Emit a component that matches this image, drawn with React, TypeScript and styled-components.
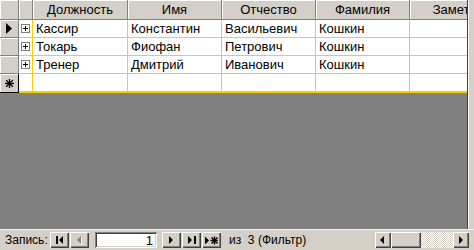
import React from 'react';
import styled, { createGlobalStyle, css } from 'styled-components';

const GlobalStyle = createGlobalStyle`
	html, body {
		margin: 0;
		padding: 0;
		background: #d4d0c8;
	}
	body {
		font-family: 'Liberation Sans', Arial, sans-serif;
		font-size: 13px;
		color: #000;
	}
`;

const COLUMNS = '19px 14px 95px 94px 94px 94px 96px';
const GRID_YELLOW = '#ffcc00';

const raised = css`
	background: #d4d0c8;
	box-shadow: inset 1px 1px #ffffff, inset -1px -1px #404040, inset -2px -2px #808080;
`;

const Window = styled.div`
	width: 474px;
	height: 250px;
	display: flex;
	flex-direction: column;
	overflow: hidden;
	background: #d4d0c8;
`;

const SheetArea = styled.div`
	height: 229px;
	display: flex;
`;

const Sheet = styled.div`
	flex: 1;
	background: #808080;
	overflow: hidden;
`;

const RightFrame = styled.div`
	width: 7px;
	box-sizing: border-box;
	border-left: 1px solid #404040;
	box-shadow: inset 1px 0 #ffffff;
	background: #d4d0c8;
`;

const Row = styled.div<{ $height: number }>`
	display: grid;
	grid-template-columns: ${COLUMNS};
	height: ${(p) => p.$height}px;
	width: max-content;
`;

const HeaderCell = styled.div`
	box-sizing: border-box;
	background: #d4d0c8;
	border-right: 1px solid #808080;
	border-bottom: 1px solid #808080;
	box-shadow: inset 1px 1px #ffffff;
	display: flex;
	align-items: center;
	justify-content: center;
	white-space: nowrap;
	overflow: hidden;
`;

const SelectorCell = styled.div<{ $newRow?: boolean }>`
	box-sizing: border-box;
	background: #d4d0c8;
	display: flex;
	align-items: center;
	justify-content: center;
	border-right: 1px solid ${(p) => (p.$newRow ? '#000000' : '#808080')};
	border-bottom: 1px solid ${(p) => (p.$newRow ? '#000000' : '#808080')};
	box-shadow: inset 1px 1px #ffffff;
`;

const DataCell = styled.div<{ $newRow?: boolean }>`
	box-sizing: border-box;
	background: #ffffff;
	border-right: 1px solid ${GRID_YELLOW};
	border-bottom: ${(p) => (p.$newRow ? 2 : 1)}px solid ${GRID_YELLOW};
	padding-left: 3px;
	display: flex;
	align-items: center;
	white-space: nowrap;
	overflow: hidden;
`;

const ExpandCell = styled(DataCell)`
	padding-left: 0;
	justify-content: center;
`;

const PlusBox = styled.span`
	width: 9px;
	height: 9px;
	box-sizing: border-box;
	border: 1px solid #808080;
	background: #ffffff;
	position: relative;
	&::before,
	&::after {
		content: '';
		position: absolute;
		background: #000;
	}
	&::before {
		left: 1px;
		top: 3px;
		width: 5px;
		height: 1px;
	}
	&::after {
		left: 3px;
		top: 1px;
		width: 1px;
		height: 5px;
	}
`;

const NavBar = styled.div`
	height: 21px;
	box-sizing: border-box;
	border-top: 1px solid #f4f2ee;
	display: flex;
	align-items: center;
	padding-left: 5px;
	padding-right: 5px;
	white-space: nowrap;
	font-size: 12px;
`;

const NavLabel = styled.span`
	flex: none;
	width: 45px;
`;

const ButtonGroup = styled.div<{ $gap?: number }>`
	display: flex;
	flex: none;
	gap: 1px;
	margin-left: ${(p) => p.$gap ?? 0}px;
`;

const NavButton = styled.div`
	${raised};
	width: 19px;
	height: 16px;
	display: flex;
	align-items: center;
	justify-content: center;
`;

const RecordInput = styled.div`
	flex: none;
	width: 62px;
	height: 16px;
	margin-left: 6px;
	box-sizing: border-box;
	background: #ffffff;
	box-shadow: inset 1px 1px #808080, inset -1px -1px #ffffff, inset 2px 2px #404040, inset -2px -2px #d4d0c8;
	display: flex;
	align-items: center;
	justify-content: flex-end;
	padding-right: 4px;
	font-size: 13px;
`;

const CountText = styled.span`
	margin-left: 8px;
	white-space: pre;
`;

const ScrollBar = styled.div`
	margin-left: auto;
	display: flex;
	flex: none;
	height: 16px;
	width: 94px;
`;

const ScrollButton = styled.div`
	${raised};
	width: 16px;
	height: 16px;
	display: flex;
	align-items: center;
	justify-content: center;
	flex: none;
`;

const ScrollThumb = styled.div`
	${raised};
	width: 30px;
	height: 16px;
	flex: none;
`;

const ScrollTrack = styled.div`
	flex: 1;
	background-color: #ffffff;
	background-image: repeating-conic-gradient(#d4d0c8 0% 25%, #ffffff 0% 50%);
	background-size: 2px 2px;
`;

const Glyph = ({ kind, disabled }: { kind: string; disabled?: boolean }) => {
	const fill = disabled ? '#808080' : '#000000';
	if (kind === 'first')
		return (
			<svg width='8' height='8' viewBox='0 0 8 8'>
				<rect x='0' y='0' width='2' height='8' fill={fill} />
				<polygon points='7,0 3,4 7,8' fill={fill} />
			</svg>
		);
	if (kind === 'prev')
		return (
			<svg width='6' height='9' viewBox='0 0 6 9'>
				{disabled && <polygon points='5,1 1,5 5,9' fill='#ffffff' />}
				<polygon points='4,0 0,4 4,8' fill={fill} />
			</svg>
		);
	if (kind === 'next')
		return (
			<svg width='5' height='8' viewBox='0 0 5 8'>
				<polygon points='0,0 4,4 0,8' fill={fill} />
			</svg>
		);
	if (kind === 'last')
		return (
			<svg width='8' height='8' viewBox='0 0 8 8'>
				<polygon points='0,0 4,4 0,8' fill={fill} />
				<rect x='6' y='0' width='2' height='8' fill={fill} />
			</svg>
		);
	return (
		<svg width='13' height='9' viewBox='0 0 13 9'>
			<polygon points='0,0.5 4,4.5 0,8.5' fill={fill} />
			<g stroke={fill} strokeWidth='1.4'>
				<line x1='9.5' y1='0.5' x2='9.5' y2='8.5' />
				<line x1='5.5' y1='4.5' x2='13' y2='4.5' />
				<line x1='6.5' y1='1.5' x2='12.5' y2='7.5' />
				<line x1='12.5' y1='1.5' x2='6.5' y2='7.5' />
			</g>
		</svg>
	);
};

const CurrentMarker = () => (
	<svg width='6' height='11' viewBox='0 0 6 11'>
		<polygon points='0,0 6,5.5 0,11' fill='#000' />
	</svg>
);

const NewMarker = () => (
	<svg width='9' height='9' viewBox='0 0 9 9'>
		<g stroke='#000' strokeWidth='1.3'>
			<line x1='4.5' y1='0' x2='4.5' y2='9' />
			<line x1='0' y1='4.5' x2='9' y2='4.5' />
			<line x1='1.2' y1='1.2' x2='7.8' y2='7.8' />
			<line x1='7.8' y1='1.2' x2='1.2' y2='7.8' />
		</g>
	</svg>
);

const headers = ['Должность', 'Имя', 'Отчество', 'Фамилия', 'Заметки'];

const records = [
	{ post: 'Кассир', name: 'Константин', patronymic: 'Васильевич', surname: 'Кошкин' },
	{ post: 'Токарь', name: 'Фиофан', patronymic: 'Петрович', surname: 'Кошкин' },
	{ post: 'Тренер', name: 'Дмитрий', patronymic: 'Иванович', surname: 'Кошкин' }
];

const App = () => {
	return (
		<>
			<GlobalStyle />
			<Window>
				<SheetArea>
					<Sheet>
						<Row $height={20}>
							<HeaderCell />
							<HeaderCell />
							{headers.map((h) => (
								<HeaderCell key={h}>{h}</HeaderCell>
							))}
						</Row>
						{records.map((r, i) => (
							<Row
								key={r.post}
								$height={18}
							>
								<SelectorCell>{i === 0 && <CurrentMarker />}</SelectorCell>
								<ExpandCell>
									<PlusBox />
								</ExpandCell>
								<DataCell>{r.post}</DataCell>
								<DataCell>{r.name}</DataCell>
								<DataCell>{r.patronymic}</DataCell>
								<DataCell>{r.surname}</DataCell>
								<DataCell />
							</Row>
						))}
						<Row $height={19}>
							<SelectorCell $newRow>
								<NewMarker />
							</SelectorCell>
							{Array.from({ length: 6 }).map((_, i) => (
								<DataCell
									key={i}
									$newRow
								/>
							))}
						</Row>
					</Sheet>
					<RightFrame />
				</SheetArea>
				<NavBar>
					<NavLabel>Запись:</NavLabel>
					<ButtonGroup>
						<NavButton>
							<Glyph kind='first' />
						</NavButton>
						<NavButton>
							<Glyph
								kind='prev'
								disabled
							/>
						</NavButton>
					</ButtonGroup>
					<RecordInput>1</RecordInput>
					<ButtonGroup $gap={5}>
						<NavButton>
							<Glyph kind='next' />
						</NavButton>
						<NavButton>
							<Glyph kind='last' />
						</NavButton>
						<NavButton>
							<Glyph kind='new' />
						</NavButton>
					</ButtonGroup>
					<CountText>{'из  3 (Фильтр)'}</CountText>
					<ScrollBar>
						<ScrollButton>
							<Glyph kind='prev' />
						</ScrollButton>
						<ScrollThumb />
						<ScrollTrack />
						<ScrollButton>
							<Glyph kind='next' />
						</ScrollButton>
					</ScrollBar>
				</NavBar>
			</Window>
		</>
	);
};

export default App;
